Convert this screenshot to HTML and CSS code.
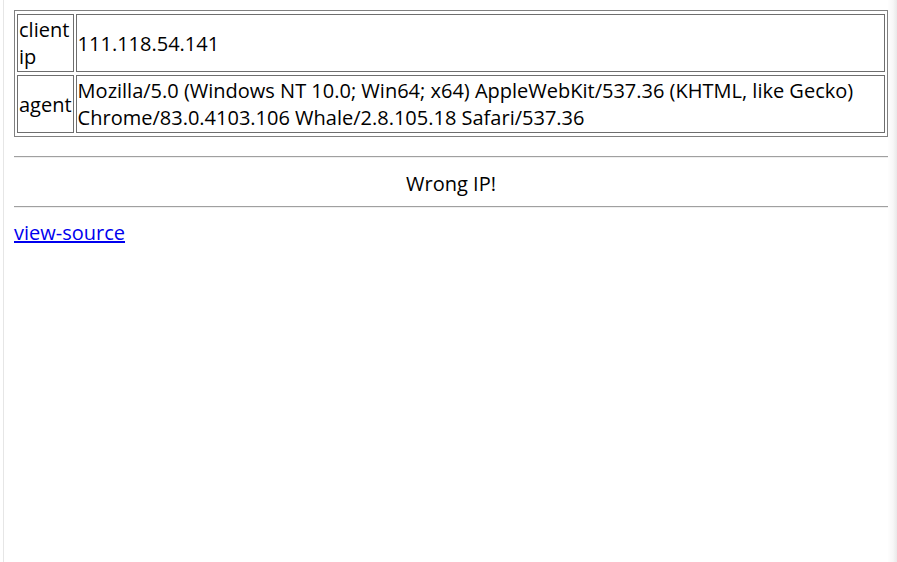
FILE: index.html
```html
<!DOCTYPE html>
<html>
<head>
<meta charset="utf-8">
<title>client info</title>
<link rel="stylesheet" href="styles.css">
</head>
<body>
<div class="frame">
  <table class="info">
    <tr>
      <td class="key">client ip</td>
      <td class="val">111.118.54.141</td>
    </tr>
    <tr>
      <td class="key">agent</td>
      <td class="val">Mozilla/5.0 (Windows NT 10.0; Win64; x64) AppleWebKit/537.36 (KHTML, like Gecko)<br>Chrome/83.0.4103.106 Whale/2.8.105.18 Safari/537.36</td>
    </tr>
  </table>
  <hr class="rule rule-top">
  <div class="msg">Wrong IP!</div>
  <hr class="rule rule-bottom">
  <div class="links"><a class="src" href="#">view-source</a></div>
</div>
</body>
</html>
```

FILE: styles.css
```css
html, body {
  margin: 0;
  padding: 0;
  height: 100%;
}

body {
  background: linear-gradient(to left, #e9e9e9 0, #f7f7f7 4px, #ffffff 10px);
  font-family: "Open Sans", "Noto Sans CJK KR", sans-serif;
  font-size: 20px;
  line-height: 27px;
  color: #000;
}

.frame {
  margin-left: 3px;
  margin-right: 9px;
  border-left: 1px solid #e6e6e6;
  padding: 10px 0 0 10px;
  min-height: calc(100% - 10px);
  background: #fff;
}

.info {
  width: 100%;
  border: 1px solid #808080;
  border-spacing: 2px 3px;
}

.info td {
  border: 1px solid #6e6e6e;
  padding: 1px;
  vertical-align: middle;
}

.key {
  width: 1px;
}

.rule {
  height: 0;
  border: 0;
  border-top: 1px solid #a0a0a0;
  border-bottom: 1px solid #efefef;
  margin: 0;
}

.rule-top {
  margin-top: 19px;
  margin-bottom: 12px;
}

.rule-bottom {
  margin-top: 9px;
  margin-bottom: 11px;
}

.msg {
  text-align: center;
}

.src {
  color: #0000ee;
  text-decoration: underline;
}
```
